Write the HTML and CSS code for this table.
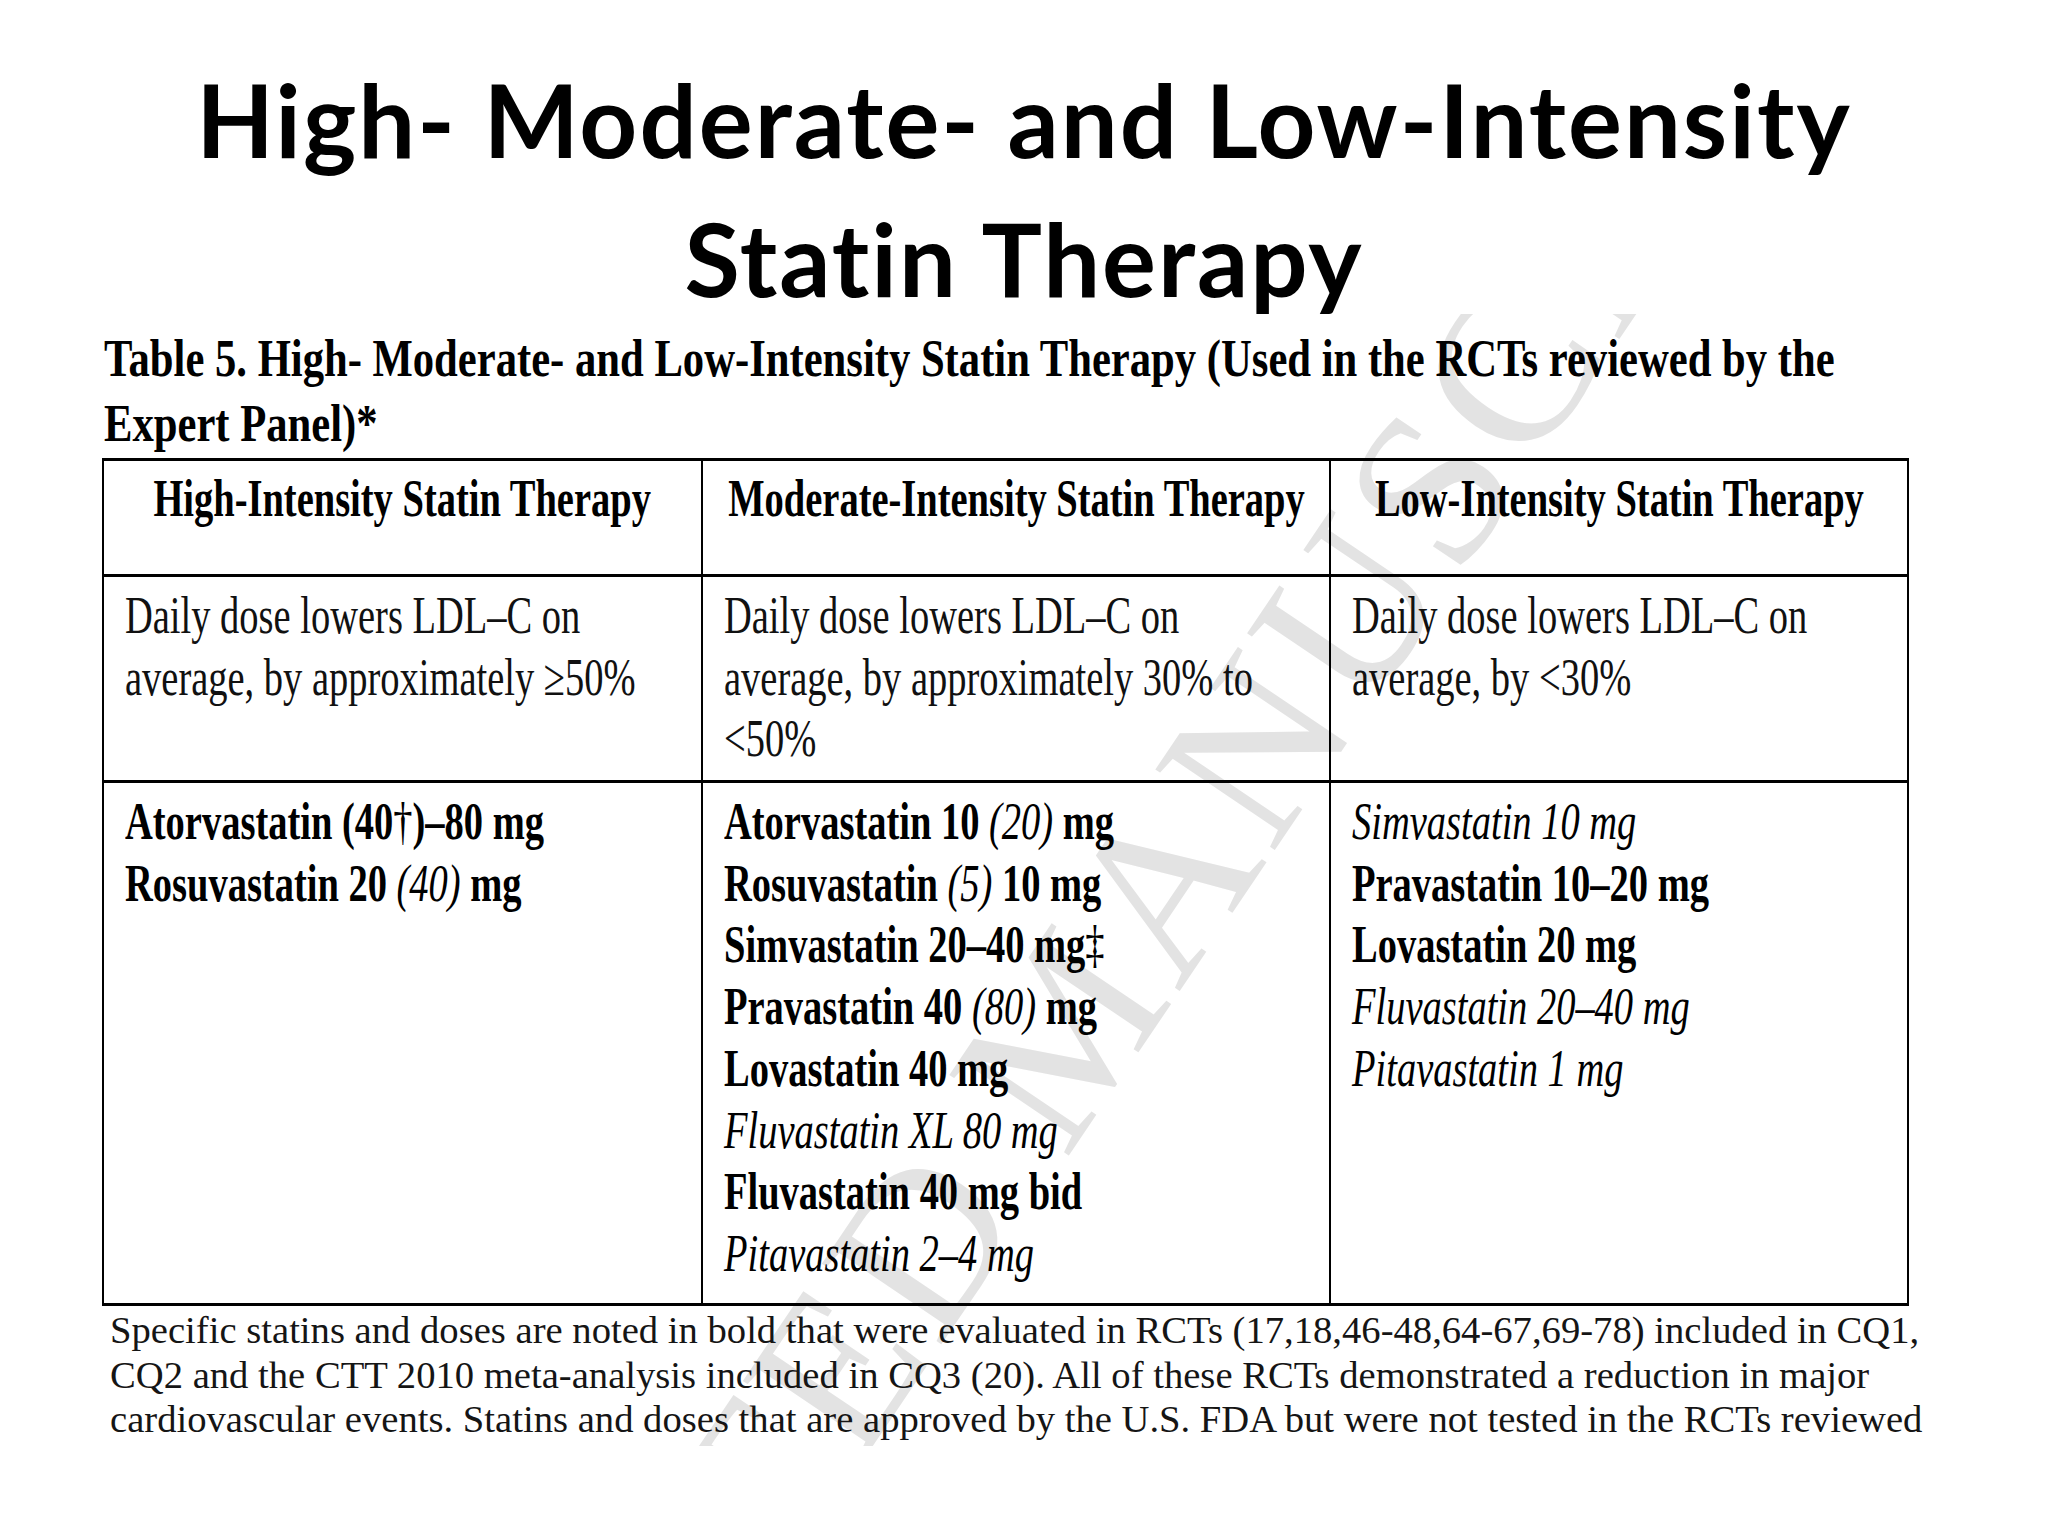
FILE: index.html
```html
<!DOCTYPE html>
<html lang="en">
<head>
<meta charset="utf-8">
<title>High- Moderate- and Low-Intensity Statin Therapy</title>
<link rel="stylesheet" href="styles.css">
</head>
<body>
<h1 class="title">High- Moderate- and Low-Intensity<br>Statin Therapy</h1>
<section class="figure">
  <div class="watermark">ACCEPTED MANUSCRIPT</div>
  <p class="caption">
    <span class="ln">Table 5. High- Moderate- and Low-Intensity Statin Therapy (Used in the RCTs reviewed by the</span>
    <span class="ln">Expert Panel)*</span>
  </p>
  <div class="tbl">
    <div class="row head">
      <div class="cell"><div class="ln">High-Intensity Statin Therapy</div></div>
      <div class="cell"><div class="ln">Moderate-Intensity Statin Therapy</div></div>
      <div class="cell"><div class="ln">Low-Intensity Statin Therapy</div></div>
    </div>
    <div class="row desc">
      <div class="cell">
        <div class="ln">Daily dose lowers LDL–C on</div>
        <div class="ln">average, by approximately &ge;50%</div>
      </div>
      <div class="cell">
        <div class="ln">Daily dose lowers LDL–C on</div>
        <div class="ln">average, by approximately 30% to</div>
        <div class="ln">&lt;50%</div>
      </div>
      <div class="cell">
        <div class="ln">Daily dose lowers LDL–C on</div>
        <div class="ln">average, by &lt;30%</div>
      </div>
    </div>
    <div class="row drugs">
      <div class="cell">
        <div class="ln">Atorvastatin (40<span class="mark">†</span>)–80 mg</div>
        <div class="ln">Rosuvastatin 20 <i class="it">(40)</i> mg</div>
      </div>
      <div class="cell">
        <div class="ln">Atorvastatin 10 <i class="it">(20)</i> mg</div>
        <div class="ln">Rosuvastatin <i class="it">(5)</i> 10 mg</div>
        <div class="ln">Simvastatin 20–40 mg<span class="mark">‡</span></div>
        <div class="ln">Pravastatin 40 <i class="it">(80)</i> mg</div>
        <div class="ln">Lovastatin 40 mg</div>
        <div class="ln"><i class="it">Fluvastatin XL 80 mg</i></div>
        <div class="ln">Fluvastatin 40 mg bid</div>
        <div class="ln"><i class="it">Pitavastatin 2–4 mg</i></div>
      </div>
      <div class="cell">
        <div class="ln"><i class="it">Simvastatin 10 mg</i></div>
        <div class="ln">Pravastatin 10–20 mg</div>
        <div class="ln">Lovastatin 20 mg</div>
        <div class="ln"><i class="it">Fluvastatin 20–40 mg</i></div>
        <div class="ln"><i class="it">Pitavastatin 1 mg</i></div>
      </div>
    </div>
  </div>
  <p class="note">Specific statins and doses are noted in bold that were evaluated in RCTs (17,18,46-48,64-67,69-78) included in CQ1,<br>CQ2 and the CTT 2010 meta-analysis included in CQ3 (20). All of these RCTs demonstrated a reduction in major<br>cardiovascular events. Statins and doses that are approved by the U.S. FDA but were not tested in the RCTs reviewed</p>
</section>
</body>
</html>
```

FILE: styles.css
```css
html, body {
  margin: 0;
  padding: 0;
  background: #ffffff;
  color: #000000;
}

body {
  width: 2048px;
  height: 1536px;
  overflow: hidden;
}

.title {
  margin: 50px 0 0;
  font-family: Lato, "Open Sans", sans-serif;
  font-weight: 700;
  font-size: 101px;
  line-height: 139px;
  letter-spacing: 2px;
  font-variant-ligatures: none;
  font-feature-settings: "liga" 0, "clig" 0;
  text-align: center;
  color: #000;
}

.figure {
  position: relative;
  z-index: 0;
  overflow: hidden;
  box-sizing: border-box;
  height: 1132px;
  margin-top: -14px;
  padding: 12px 0 0 102px;
  font-family: "Liberation Serif", "Times New Roman", serif;
}

.watermark {
  position: absolute;
  z-index: -1;
  left: 211px;
  top: 1784px;
  transform-origin: 0 0;
  transform: rotate(-56deg);
  font-family: "Liberation Serif", serif;
  font-size: 220px;
  line-height: 220px;
  letter-spacing: 7px;
  white-space: nowrap;
  color: #e3e3e3;
}

.caption {
  margin: 0 0 0 2px;
  font-weight: 700;
  font-size: 52px;
  line-height: 65px;
}

.caption .ln {
  display: block;
  white-space: nowrap;
  transform: scaleX(0.82);
  transform-origin: 0 0;
}

.tbl {
  width: 1807px;
  box-sizing: border-box;
  margin-top: 2px;
  border-style: solid;
  border-color: #000;
  border-width: 3px 2px;
}

.row {
  display: grid;
  grid-template-columns: 599px 628px 576px;
}

.row + .row {
  border-top: 3px solid #000;
}

.cell {
  border-right: 2px solid #000;
  font-size: 52px;
}

.cell:last-child {
  border-right: 0;
}

.ln {
  white-space: nowrap;
  transform: scaleX(0.74);
  transform-origin: 0 0;
}

.head {
  height: 113px;
}

.head .cell {
  display: flex;
  justify-content: center;
  align-items: flex-start;
  padding-top: 7px;
  font-weight: 700;
  line-height: 62px;
}

.head .ln {
  flex-shrink: 0;
  transform-origin: 50% 0;
}

.desc {
  height: 203px;
}

.desc .cell {
  padding: 8px 0 0 21px;
  font-weight: 400;
  line-height: 61.5px;
  color: #111;
}

.drugs {
  height: 520px;
}

.drugs .cell {
  padding: 8px 0 0 21px;
  font-weight: 700;
  line-height: 61.7px;
}

.it {
  font-style: italic;
  font-weight: 400;
}

.mark {
  font-weight: 400;
}

.note {
  margin: 3px 0 0 8px;
  font-size: 37px;
  line-height: 44.5px;
  white-space: nowrap;
  color: #151515;
  transform: scaleX(1.044);
  transform-origin: 0 0;
}
```
